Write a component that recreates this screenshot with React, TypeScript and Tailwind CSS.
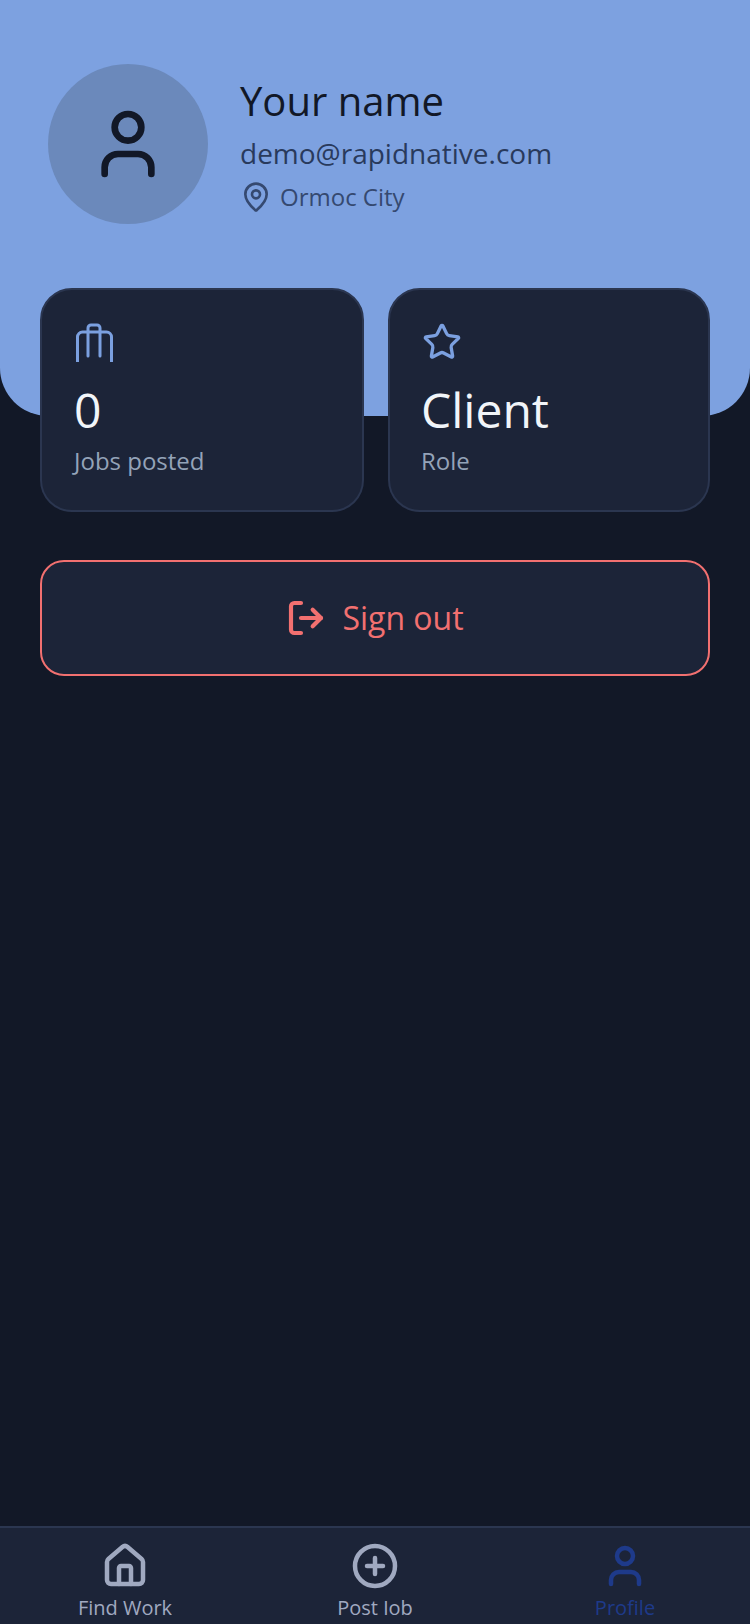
import { CirclePlus, House, LogOut, MapPin, Star, User } from "lucide-react";

function BagIcon() {
  return (
    <svg width="40" height="40" viewBox="0 0 40 40" fill="none" stroke="currentColor" strokeWidth="3" strokeLinecap="round" strokeLinejoin="round">
      <path d="M3.5 40V15a5 5 0 0 1 5-5h24a5 5 0 0 1 5 5v25" />
      <path d="M14 34V6a3 3 0 0 1 3-3h6a3 3 0 0 1 3 3v28" />
    </svg>
  );
}

function StatCard({ icon, value, label, className }: { icon: React.ReactNode; value: string; label: string; className: string }) {
  return (
    <div className={`h-[224px] rounded-[32px] border-2 border-[#2b3650] bg-[#1c2438] pt-[32px] ${className}`}>
      <div className="h-[44px] text-[#7ba0e0]">{icon}</div>
      <div className="mt-[12px] text-[48px] leading-[64px] text-[#f1f5f9]">{value}</div>
      <div className="mt-[3px] text-[24px] leading-[32px] text-[#94a3b8]">{label}</div>
    </div>
  );
}

function Tab({ icon, label, color }: { icon: React.ReactNode; label: string; color: string }) {
  return (
    <div className={`flex w-[250px] flex-col items-center ${color}`}>
      {icon}
      <span className="mt-[3px] h-[22px] overflow-hidden text-[20px] leading-[30px]">{label}</span>
    </div>
  );
}

export default function App() {
  return (
    <div className="flex h-[1624px] w-[750px] flex-col overflow-hidden bg-[#121827] font-['Open_Sans',sans-serif]">
      <div className="h-[416px] shrink-0 rounded-b-[48px] bg-[#7da1e0] pl-[48px] pt-[64px]">
        <div className="flex items-center gap-[32px]">
          <div className="flex h-[160px] w-[160px] items-center justify-center rounded-full bg-[#6b89bb] text-[#121827]">
            <User size={80} strokeWidth={2} />
          </div>
          <div>
            <div className="-mt-[2px] text-[40px] leading-[56px] text-[#121827]">Your name</div>
            <div className="mt-[4px] text-[28px] leading-[40px] text-[#293a5c]">demo@rapidnative.com</div>
            <div className="mt-[8px] flex items-center gap-[8px] text-[#354970]">
              <MapPin size={32} />
              <span className="text-[24px] leading-[32px]">Ormoc City</span>
            </div>
          </div>
        </div>
      </div>

      <div className="-mt-[128px] flex gap-[24px] px-[40px]">
        <StatCard className="w-[324px] px-[32px]" icon={<BagIcon />} value="0" label="Jobs posted" />
        <StatCard className="w-[322px] px-[31px]" icon={<Star size={40} className="ml-px" />} value="Client" label="Role" />
      </div>

      <div className="mx-[40px] mt-[48px] flex h-[116px] items-center justify-center gap-[16px] rounded-[24px] border-2 border-[#f27070] bg-[#1c2438] text-[#f27070]">
        <LogOut size={40} strokeWidth={2.5} />
        <span className="text-[32px] leading-[44px]">Sign out</span>
      </div>

      <div className="mt-auto flex h-[98px] justify-between overflow-hidden border-t-2 border-[#2b3650] bg-[#1c2438] pt-[14px]">
        <Tab icon={<House size={48} strokeWidth={2.25} />} label="Find Work" color="text-[#a0a9c0]" />
        <Tab icon={<CirclePlus size={48} strokeWidth={2.25} />} label="Post Job" color="text-[#a0a9c0]" />
        <Tab icon={<User size={48} strokeWidth={2.25} />} label="Profile" color="text-[#1e3a8a]" />
      </div>
    </div>
  );
}
